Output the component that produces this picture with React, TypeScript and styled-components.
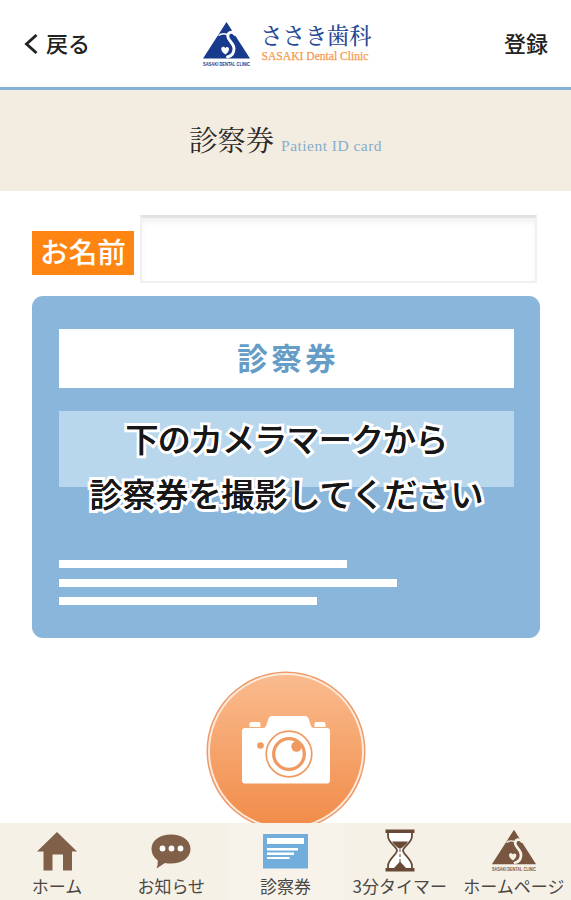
import React from "react";
import styled, { createGlobalStyle } from "styled-components";

const sans = `"Noto Sans CJK JP", "Liberation Sans", sans-serif`;
const serif = `"Liberation Serif", "Noto Serif CJK JP", "Noto Sans CJK JP", serif`;

const GlobalStyle = createGlobalStyle`
  *, *::before, *::after { box-sizing: border-box; }
  html, body { margin: 0; background: #fff; overflow: hidden; }
  h1, h2, p { margin: 0; font-weight: 400; }
  button { border: 0; padding: 0; background: none; font: inherit; color: inherit; }
  svg { flex: none; overflow: visible; }
`;

const Screen = styled.div`
  width: 571px;
  height: 900px;
  display: flex;
  flex-direction: column;
  overflow: hidden;
  background: #fff;
  font-family: ${sans};
  color: #222;
`;

const Header = styled.header`
  flex: none;
  height: 90px;
  display: grid;
  grid-template-columns: 1fr auto 1fr;
  padding: 0 23px 0 24px;
  border-bottom: 3px solid #84b3d9;
`;

const HeaderButton = styled.button<{ $end?: boolean }>`
  display: flex;
  align-items: center;
  justify-content: ${(p) => (p.$end ? "flex-end" : "flex-start")};
  gap: 8px;
  height: 87px;
  font-size: 22px;
  line-height: 30px;
  font-weight: 500;
  color: #222;
`;

const HeaderLabel = styled.span`
  padding-bottom: 4px;
`;

const Brand = styled.div`
  display: flex;
  gap: 10px;
  padding-top: 21px;
`;

const BrandText = styled.div`
  display: flex;
  flex-direction: column;
  padding-top: 1px;
`;

const BrandName = styled.span`
  font-family: ${serif};
  font-size: 22.2px;
  line-height: 29px;
  font-weight: 500;
  color: #294a94;
  white-space: nowrap;
`;

const BrandSub = styled.span`
  font-family: ${serif};
  font-size: 11.6px;
  line-height: 12px;
  padding-left: 1px;
  color: #f59a50;
  white-space: nowrap;
  -webkit-text-stroke: 0.25px #f59a50;
`;

const TitleBand = styled.div`
  flex: none;
  height: 101px;
  display: flex;
  justify-content: center;
  align-items: baseline;
  gap: 7px;
  padding-top: 32px;
  background: #f3ece1;
`;

const Title = styled.h1`
  font-family: ${serif};
  font-size: 28.4px;
  line-height: 40px;
  color: #2c2925;
`;

const TitleEn = styled.span`
  font-family: ${serif};
  font-size: 15.5px;
  letter-spacing: 0.48px;
  color: #86adcb;
`;

const Content = styled.main`
  flex: 1;
  min-height: 0;
  overflow: hidden;
  display: flex;
  flex-direction: column;
  padding: 24px 31px 0 32px;
`;

const NameRow = styled.label`
  flex: none;
  display: flex;
  align-items: flex-start;
  gap: 6px;
  height: 81px;
`;

const NameTag = styled.span`
  width: 102px;
  height: 44px;
  margin-top: 16px;
  display: flex;
  justify-content: center;
  background: #ff8512;
  color: #fff;
  font-size: 28.6px;
  line-height: 40px;
  font-weight: 500;
  white-space: nowrap;
`;

const NameInput = styled.input`
  width: 397px;
  height: 68px;
  padding: 0 12px;
  border: 2px solid #f0f0f0;
  border-top: 3px solid #e3e3e3;
  border-radius: 1px;
  background: #fff;
  box-shadow: inset 0 5px 8px -3px #ececec;
  outline: none;
  font: 26px ${sans};
`;

const Card = styled.section`
  flex: none;
  height: 342px;
  border-radius: 11px;
  background: #8ab6db;
  display: flex;
  flex-direction: column;
  padding: 33px 26px 0 27px;
`;

const CardTitle = styled.h2`
  height: 59px;
  background: #fff;
  text-align: center;
  font-size: 30.5px;
  font-weight: 700;
  letter-spacing: 3.5px;
  text-indent: 3.5px;
  line-height: 57px;
  color: #659dc7;
`;

const Notice = styled.div`
  height: 76px;
  margin-top: 23px;
  background: #b9d7ec;
  display: flex;
  flex-direction: column;
  align-items: center;
`;

const NoticeText = styled.p<{ $tight?: boolean }>`
  flex: none;
  font-size: 33px;
  line-height: 55px;
  font-weight: 500;
  letter-spacing: ${(p) => (p.$tight ? "-0.8px" : "0")};
  color: #171717;
  white-space: nowrap;
  -webkit-text-stroke: 6px #fff;
  paint-order: stroke fill;
  text-shadow: 0 0 0.5px #171717;
`;

const Lines = styled.div`
  display: flex;
  flex-direction: column;
  gap: 10.5px;
  margin-top: 73px;
`;

const Line = styled.span<{ $w: number }>`
  width: ${(p) => p.$w}px;
  height: 8px;
  background: #fff;
`;

const CameraButton = styled.button`
  flex: none;
  display: flex;
  justify-content: center;
  margin-top: 33px;
`;

const Nav = styled.nav`
  flex: none;
  height: 77px;
  display: grid;
  grid-template-columns: repeat(5, 1fr);
  background: #f6f1e7;
`;

const NavItem = styled.button<{ $active?: boolean }>`
  display: flex;
  flex-direction: column;
  align-items: center;
  min-width: 0;
  padding-top: 5px;
  background: ${(p) => (p.$active ? "#f7f3ea" : "transparent")};
`;

const NavIcon = styled.span`
  height: 46px;
  display: flex;
`;

const NavLabel = styled.span`
  font-size: 17px;
  line-height: 23px;
  color: #4b4743;
  white-space: nowrap;
`;

function ClinicMark({ color, bg, width, height }: { color: string; bg: string; width: number; height: number }) {
  return (
    <svg width={width} height={height} viewBox="0 0 50 47">
      <path d="M25.500 1 49 37.500H2z" fill={color} />
      <path
        d="M34 13.500C32 9.800 26.500 11 26.800 15.500c.2 4 6 6.500 6.200 12 .1 4.500-2.200 7.500-6.500 8.500"
        fill="none"
        stroke={bg}
        strokeWidth="2.900"
        strokeLinecap="round"
      />
      <path d="M17.500 14.500q4-3 9-.8M31 12.200q3 .3 4.800 2.300" stroke={bg} fill="none" strokeWidth="1.500" />
      <path d="M24.500 33.500c-3-2-4.700-4-4.200-6.200.7-2 3.300-2 4 0 1-2 3.700-1.500 3.700.8 0 2.200-1.500 3.700-3.500 5.400z" fill={bg} />
      <text
        x="25.500"
        y="44.500"
        textAnchor="middle"
        textLength="47"
        lengthAdjust="spacingAndGlyphs"
        fontFamily="Liberation Sans, sans-serif"
        fontSize="4.800"
        fontWeight="700"
        fill={color}
      >
        SASAKI DENTAL CLINIC
      </text>
    </svg>
  );
}

function BackIcon() {
  return (
    <svg width="14" height="20" viewBox="0 0 14 20">
      <path d="M12.500 1 2.500 10l10 9" fill="none" stroke="#222" strokeWidth="2.900" />
    </svg>
  );
}

function CameraIcon() {
  return (
    <svg width="160" height="160" viewBox="0 0 160 160">
      <defs>
        <linearGradient id="camera-fill" x1="0" y1="0" x2="0" y2="1">
          <stop offset="0" stopColor="#fabb8e" />
          <stop offset="1" stopColor="#f18c49" />
        </linearGradient>
      </defs>
      <circle cx="80" cy="80" r="79.500" fill="#ee9b69" />
      <circle cx="80" cy="80" r="78" fill="#ffe9db" />
      <circle cx="80" cy="80" r="76" fill="url(#camera-fill)" />
      <path
        fill="#fff"
        d="M45 51h8q1.500 0 1.500 1.500V56h-11v-3.500Q43.500 51 45 51zM110 51h8q1.500 0 1.500 1.500V56h-11v-3.500q0-1.500 1.500-1.500z"
      />
      <path
        fill="#fff"
        d="M39 57h18q2.500 0 3.200-2.500l2.300-7Q63.200 45 65.500 45h34q2.300 0 3 2.500l2.300 7Q105.500 57 108 57h13q3 0 3 3v49.500q0 3-3 3H39q-3 0-3-3V60q0-3 3-3z"
      />
      <circle cx="54.500" cy="74.500" r="3.300" fill="#f09a62" />
      <circle cx="83" cy="83" r="22.800" fill="none" stroke="#f09a62" strokeWidth="1.700" />
      <circle cx="83" cy="83" r="15.300" fill="none" stroke="#f09a62" strokeWidth="3.300" />
      <circle cx="90.500" cy="75.500" r="5.200" fill="#f09a62" />
    </svg>
  );
}

function HomeIcon() {
  return (
    <svg width="42" height="46" viewBox="0 0 42 46">
      <path d="M21 4 41 23.500h-5V42.500h-9V26.500H16.500v16h-9V23.500H1z" fill="#806049" />
    </svg>
  );
}

function ChatIcon() {
  return (
    <svg width="40" height="46" viewBox="0 0 40 46">
      <path
        d="M20 6.500c11 0 19.500 5.500 19.500 14.500S31 35.500 20 35.500q-3.500 0-6-.6Q10 37.500 5.500 40.500q1.500-3.500 1.300-8Q.5 28 .5 21C.5 12 9 6.500 20 6.500z"
        fill="#806049"
      />
      <g fill="#fff">
        <circle cx="11.500" cy="20.500" r="2.900" />
        <circle cx="20.500" cy="20.500" r="2.900" />
        <circle cx="29.500" cy="20.500" r="2.900" />
      </g>
    </svg>
  );
}

function CardIcon() {
  return (
    <svg width="46" height="46" viewBox="0 0 46 46">
      <path d="M1 6h45v34.500H1z" fill="#72aedb" />
      <path d="M5 10h37v6H5zM5 20h31v2.500H5zM5 24.500h27V27H5zM5 29h22.500v2H5z" fill="#fff" />
    </svg>
  );
}

function TimerIcon() {
  return (
    <svg width="32" height="46" viewBox="0 0 32 46">
      <path
        d="M4 4v4c0 7 9 10.500 9 14.500S4 31 4 38v3h24v-3c0-7-9-11.500-9-15.500S28 15 28 8V4z"
        fill="#fff"
        stroke="#694a36"
        strokeWidth="1.800"
      />
      <path d="M8 13.500h16q-1.500 3-7 7h-2q-5.500-4-7-7zM16 33.500l6 6.500H10z" fill="#694a36" />
      <path d="M16 21v14" stroke="#694a36" strokeWidth="1" strokeDasharray="3 2" />
      <path d="M1.500 1.500h29V5h-29zM1.500 40h29v3.500h-29z" fill="#694a36" />
    </svg>
  );
}

const tabs = [
  { label: "ホーム", icon: <HomeIcon /> },
  { label: "お知らせ", icon: <ChatIcon /> },
  { label: "診察券", icon: <CardIcon />, active: true },
  { label: "3分タイマー", icon: <TimerIcon /> },
  { label: "ホームページ", icon: <ClinicMark color="#795640" bg="#f6f1e7" width={47} height={46} /> },
];

export default function App() {
  return (
    <Screen>
      <GlobalStyle />
      <Header>
        <HeaderButton>
          <BackIcon />
          <HeaderLabel>戻る</HeaderLabel>
        </HeaderButton>
        <Brand>
          <ClinicMark color="#183a8c" bg="#fff" width={50} height={47} />
          <BrandText>
            <BrandName>ささき歯科</BrandName>
            <BrandSub>SASAKI Dental Clinic</BrandSub>
          </BrandText>
        </Brand>
        <HeaderButton $end>
          <HeaderLabel>登録</HeaderLabel>
        </HeaderButton>
      </Header>
      <TitleBand>
        <Title>診察券</Title>
        <TitleEn>Patient ID card</TitleEn>
      </TitleBand>
      <Content>
        <NameRow>
          <NameTag>お名前</NameTag>
          <NameInput aria-label="お名前" />
        </NameRow>
        <Card>
          <CardTitle>診察券</CardTitle>
          <Notice>
            <NoticeText $tight>下のカメラマークから</NoticeText>
            <NoticeText>診察券を撮影してください</NoticeText>
          </Notice>
          <Lines>
            <Line $w={288} />
            <Line $w={338} />
            <Line $w={258} />
          </Lines>
        </Card>
        <CameraButton aria-label="カメラ">
          <CameraIcon />
        </CameraButton>
      </Content>
      <Nav>
        {tabs.map((tab) => (
          <NavItem key={tab.label} $active={tab.active}>
            <NavIcon>{tab.icon}</NavIcon>
            <NavLabel>{tab.label}</NavLabel>
          </NavItem>
        ))}
      </Nav>
    </Screen>
  );
}
